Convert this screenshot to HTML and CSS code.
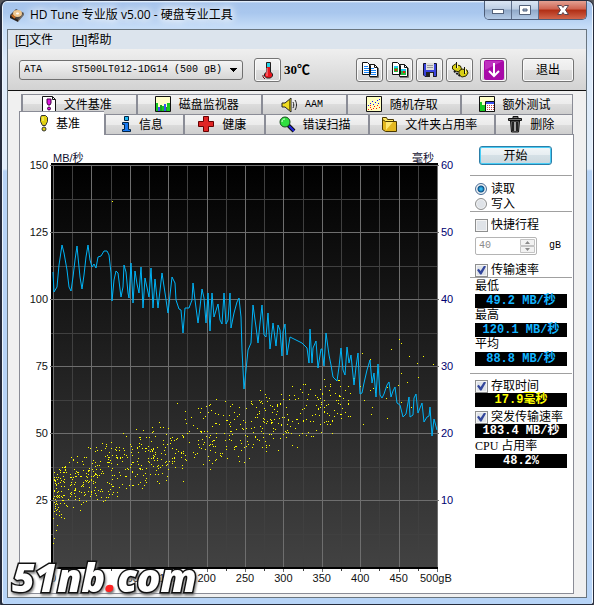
FILE: index.html
```html
<!DOCTYPE html>
<html lang="zh-CN">
<head>
<meta charset="utf-8">
<title>HD Tune 专业版 v5.00 - 硬盘专业工具</title>
<link rel="stylesheet" href="styles.css">
</head>
<body>
<div class="window">
  <header class="titlebar">
    <svg class="app-icon" width="16" height="16" viewBox="0 0 16 16"><path d="M1 8 7 2l8 4-6 8z" fill="#4a4440"/><path d="M1 8v3l8 4v-2z" fill="#26201d"/><path d="m9 13 6-7v2l-6 7z" fill="#6d655f"/><ellipse cx="8.5" cy="6.5" rx="4.5" ry="3.4" fill="#f0c890"/><ellipse cx="8.5" cy="6.5" rx="1.5" ry="1.1" fill="#fff"/><path d="m3 8 3 3" stroke="#c86a1c" stroke-width="2"/></svg>
    <h1>HD Tune 专业版 v5.00 - 硬盘专业工具</h1>
    <div class="caption">
      <button class="cap" aria-label="最小化"><svg width="14" height="12" viewBox="0 0 14 12"><rect x="1.500" y="5.500" width="11" height="4" fill="#fff" stroke="#53617a"/></svg></button>
      <button class="cap" aria-label="最大化"><svg width="14" height="12" viewBox="0 0 14 12"><path d="M1.500 1.500h11v9h-11zM5 5h4v2H5z" fill="#fff" fill-rule="evenodd" stroke="#53617a"/></svg></button>
      <button class="cap close" aria-label="关闭"><svg width="14" height="12" viewBox="0 0 14 12"><path d="M1.500 1.500h4L7 3.500l1.500-2h4L9.500 6l3 4.500h-4L7 8.500l-1.500 2h-4l3-4.500z" fill="#fff" stroke="#5b4650"/></svg></button>
    </div>
  </header>
  <main class="client">
    <nav class="menu"><a href="#file">[<u>F</u>]文件</a><a href="#help">[<u>H</u>]帮助</a></nav>
    <div class="toolbar">
      <select class="drive" aria-label="硬盘"><option>ATA&nbsp;&nbsp;&nbsp;&nbsp;&nbsp;ST500LT012-1DG14 (500 gB)</option></select>
      <button class="tool" aria-label="温度"><svg width="12" height="18" viewBox="0 0 12 18"><path d="M4.500 1.500h4v9.500l2 2v2l-2 2h-4l-2-2v-2l2-2z" fill="#e8141c" stroke="#222"/><path d="M5 2h3v4H5z" fill="#25d3e8"/><path d="M5 7v8" stroke="#ff9aa0"/><path d="M1 14v2l2 2" stroke="#6e0810" fill="none"/></svg></button>
      <output class="temp">30℃</output>
      <div class="tools">
        <button class="tool" aria-label="复制文本"><svg width="18" height="18" viewBox="0 0 18 18"><path d="M1.500 1.500h5l3 3v9h-8zM8.500 3.500h5l3 3v9h-8z" fill="#fff" stroke="#111"/><path d="M3 5.500h4M3 7.500h5M3 9.500h5M3 11.500h5M10 7.500h3M10 9.500h5M10 11.500h5M10 13.500h5" stroke="#1683f5"/><path d="M13.500 3.500v3h3" fill="none" stroke="#111"/><path d="M17.500 7v9.500H9" fill="none" stroke="#777"/></svg></button>
        <button class="tool" aria-label="复制图像"><svg width="18" height="18" viewBox="0 0 18 18"><path d="M1.500 1.500h5l3 3v9h-8zM8.500 3.500h5l3 3v9h-8z" fill="#fff" stroke="#111"/><path d="M3 5h4v6H3zM10 8h5v6h-5z" fill="#22b83a"/><path d="M3 5h4v2H3zM10 8h5v2h-5z" fill="#23c6ee"/><path d="M4 8h2v2H4zM12 10h2v2h-2z" fill="#e81818"/><path d="M13.500 3.500v3h3" fill="none" stroke="#111"/><path d="M17.500 7v9.500H9" fill="none" stroke="#777"/></svg></button>
        <button class="tool" aria-label="保存"><svg width="16" height="16" viewBox="0 0 16 16"><path d="M1.500 1.500h13v13H3l-1.500-1.500z" fill="#3a44dc" stroke="#15152e"/><path d="M4 1h8v7H4z" fill="#dedede"/><path d="M5 3.500h6M5 5.500h6" stroke="#999"/><path d="M4 10h8v5H4z" fill="#222"/><path d="M8 11h3v4H8z" fill="#ddd"/></svg></button>
        <button class="tool" aria-label="选项"><svg width="18" height="18" viewBox="0 0 18 18"><g stroke="#2b2700" fill="#d8cf13"><path d="m1.500 5 3-2 2 1 3 1 1 3-2 3-4-1-3-2z"/><path d="m8 10 3-2 5 1 1 3-2 3-4 1-3-2z"/></g><path d="M5.500 1v6M13.500 6v7" stroke="#111"/><path d="M6.500 2v5M14.500 7v5" stroke="#fff9a0"/><path d="m3 10 6 5" stroke="#111" stroke-width="2" stroke-dasharray="2 1"/></svg></button>
        <button class="tool update" aria-label="更新"><svg width="20" height="20" viewBox="0 0 20 20"><rect width="20" height="20" rx="2" fill="#a80aa8"/><path d="M1 10V1h18z" fill="#cf4ccf" opacity=".6"/><path d="M10 3v13M5 11l5 5 5-5" fill="none" stroke="#fff" stroke-width="2"/></svg></button>
        <button class="tool exit">退出</button>
      </div>
    </div>
    <div class="body">
      <div class="tabs back">
        <button class="tab w115"><svg width="15" height="17" viewBox="0 0 15 17"><path d="M.500.500h10l3 3v12H.500z" fill="#fff" stroke="#111"/><path d="M10.500.500v3h3" fill="none" stroke="#111"/><path d="M5 3h4v4L8 9H6L5 7z" fill="#e012e0" stroke="#400040"/><circle cx="7" cy="12.500" r="1.500" fill="#e012e0" stroke="#400040"/></svg>文件基准</button>
        <button class="tab w126"><svg width="17" height="17" viewBox="0 0 17 17"><path d="M.500.500h15v15H.500z" fill="#ffffc8" stroke="#111"/><path d="M1 7h2v8H1zM7 10h2v5H7zM12 7h3v8h-3z" fill="#16c820"/><path d="M3 11h2v4H3zM9 8h2v7H9z" fill="#3c50f0"/><path d="M5 9h2v6H5zM11 11h1v4h-1z" fill="#16a020"/></svg>磁盘监视器</button>
        <button class="tab w84 latin"><svg width="17" height="16" viewBox="0 0 17 16"><path d="M1 6h3l6-5v14l-6-5H1z" fill="#f0dc20" stroke="#222"/><path d="M8.500 3v10" stroke="#807000"/><path d="M12 5c1 2 1 4 0 6M14 3c2 3 2 7 0 10" fill="none" stroke="#222"/></svg>AAM</button>
        <button class="tab w114"><svg width="17" height="17" viewBox="0 0 17 17"><path d="M.500.500h15v15H.500z" fill="#ffffc0" stroke="#111"/><path d="M2 9h1v1H2zM4 7h1v1H4zM6 5h1v1H6zM7 8h1v1H7zM9 6h1v1H9zM11 4h1v1h-1zM12 7h1v1h-1zM13 3h1v1h-1z" fill="#11f"/><path d="M2 13h1v1H2zM4 11h1v1H4zM5 13h1v1H5zM7 12h1v1H7zM8 10h1v1H8zM10 12h1v1h-1zM11 9h1v1h-1zM13 11h1v1h-1zM4 9h1v1H4z" fill="#f11"/></svg>随机存取</button>
        <button class="tab w112"><svg width="17" height="17" viewBox="0 0 17 17"><path d="M.500.500h15v15H.500z" fill="#ffffc8" stroke="#111"/><path d="M1 6h2v9H1zM3 9h3v6H3z" fill="#16c820"/><path d="M6.500 5.500h9v10h-9z" fill="#fff" stroke="#111"/><path d="M7 6h8v2H7z" fill="#3c50f0"/><path d="M8 9.500h7M8 11.500h7M8 13.500h7" stroke="#c44" stroke-dasharray="1 1"/></svg>额外测试</button>
      </div>
      <div class="tabs front">
        <button class="tab w85 active"><svg width="10" height="17" viewBox="0 0 10 17"><path d="M2.500.500h4l2 2v4l-2 4h-3l-2-4v-4z" fill="#e0d010" stroke="#333"/><path d="M4 2v4" stroke="#fffa90"/><circle cx="5" cy="14" r="2" fill="#e0d010" stroke="#333"/></svg>基准</button>
        <button class="tab w78"><svg width="11" height="17" viewBox="0 0 11 17"><path d="M3.500.500h4v4h-4z" fill="#20b8f0" stroke="#024"/><path d="M1.500 6.500h6v7h2v2h-8v-2h2v-5h-2z" fill="#1878f0" stroke="#024"/></svg>信息</button>
        <button class="tab w80"><svg width="17" height="17" viewBox="0 0 17 17"><path d="M5.500.500h5v5h5v5h-5v5h-5v-5h-5v-5h5z" fill="#e02424" stroke="#600"/></svg>健康</button>
        <button class="tab w104"><svg width="17" height="17" viewBox="0 0 17 17"><path d="m9 9 6 6" stroke="#111" stroke-width="4"/><path d="m10 10 5 5" stroke="#2028e0" stroke-width="2"/><circle cx="6" cy="6" r="5" fill="#30e040" stroke="#174a1c"/><path d="M3 6c0-2 1-3 3-3" stroke="#d8ffd8" fill="none"/></svg>错误扫描</button>
        <button class="tab w128"><svg width="17" height="17" viewBox="0 0 17 17"><path d="M1.500 13.500v-12h4l1 2h6v2" fill="#ffe860" stroke="#4a3800"/><path d="M4.500 5.500h11v10h-11l-3-2v-10z" fill="#e4b820" stroke="#4a3800"/><path d="M5 6h7l-7 8z" fill="#ffe870"/></svg>文件夹占用率</button>
        <button class="tab w77"><svg width="15" height="17" viewBox="0 0 15 17"><path d="M5 2V.500h5V2M.500 2.500h13v2H.500z" fill="#777" stroke="#111"/><path d="M2.500 5h9l-1 11h-7z" fill="#777" stroke="#111"/><path d="M5 6v9M9 6v9" stroke="#222" stroke-width="2"/><path d="M7 6v9" stroke="#ccc"/></svg>删除</button>
      </div>
      <section class="panel">
        <div class="chart">
          <svg viewBox="20 135 450 458" role="img" aria-label="传输速率与存取时间">
            <defs><linearGradient id="plot" x1="0" y1="0" x2="0" y2="1"><stop offset="0" stop-color="#000"/><stop offset="1" stop-color="#424242"/></linearGradient></defs>
            <rect x="51" y="163" width="387" height="406" fill="#000"/>
            <rect x="53" y="165" width="384" height="402" fill="url(#plot)"/>
            <g id="grid" shape-rendering="crispEdges"></g>
            <path id="dots" fill="#ff0" shape-rendering="crispEdges"/>
            <polyline class="rate" points="53,272 54,292 57,287 59,265 62,245 64,253 67,270 69,287 71,291 73,277 75,260 77,246 78,257 80,277 82,289 84,275 86,257 88,245 90,260 92,267 94,264 96,268 98,257 101,256 104,251 107,251 109,255 111,273 112,301 114,280 116,271 118,273 121,297 123,287 124,265 126,272 128,293 129,298 131,263 133,303 135,271 137,284 139,293 141,267 143,308 145,278 149,297 151,268 153,308 155,279 158,308 162,273 165,293 168,313 172,277 175,283 176,300 179,309 181,310 183,333 185,308 189,308 192,300 193,283 195,300 198,323 200,307 202,289 204,298 206,323 208,293 210,331 212,293 214,317 218,304 220,320 222,324 224,293 226,324 228,320 230,293 231,328 234,313 237,302 239,298 241,317 242,350 244,389 246,370 248,350 251,343 253,305 256,327 258,343 260,323 262,305 264,335 266,337 268,313 270,349 273,323 276,346 278,325 280,330 282,356 283,332 285,324 287,355 290,337 302,343 307,348 309,363 310,329 312,363 313,348 316,341 318,368 321,349 322,349 324,366 326,333 329,355 331,365 333,377 337,381 339,367 341,348 343,370 345,375 347,347 349,363 351,355 354,385 356,367 358,353 360,394 362,393 364,383 367,370 370,360 372,383 374,373 376,397 378,364 380,395 382,398 384,394 387,385 389,382 391,397 393,391 395,387 397,403 400,405 403,417 406,414 409,397 410,417 413,415 414,398 416,394 418,413 422,403 424,422 427,417 429,416 430,407 432,436 434,419 437,430"/>
            <g class="num" id="labels"></g>
            <text class="unit" x="53" y="162">MB/秒</text>
            <text class="unit" x="412" y="162">毫秒</text>
          </svg>
        </div>
        <aside class="side">
          <div class="group start"><button class="go">开始</button></div>
          <div class="group mode">
            <label class="row"><input type="radio" name="mode" checked>读取</label>
            <label class="row"><input type="radio" name="mode">写入</label>
          </div>
          <div class="group stroke">
            <label class="row"><input type="checkbox">快捷行程</label>
            <label class="size"><span class="spin"><input type="text" value="40" disabled><i class="arrows"><svg width="15" height="14" viewBox="0 0 15 14"><path d="M.500.500h14v6H.500zM.500 7.500h14v6H.500z" fill="#f2f2f2" stroke="#c4c4c4"/><path d="m5 5 2.500-3L10 5zM5 9l2.500 3L10 9z" fill="#8a8a8a"/></svg></i></span>gB</label>
            <label class="row"><input type="checkbox" checked>传输速率</label>
          </div>
          <div class="group rates">
            <span class="cap-text">最低</span><output class="lcd">49.2 MB/秒</output>
            <span class="cap-text">最高</span><output class="lcd">120.1 MB/秒</output>
            <span class="cap-text">平均</span><output class="lcd">88.8 MB/秒</output>
          </div>
          <div class="group extra">
            <label class="row"><input type="checkbox" checked>存取时间</label><output class="lcd yellow">17.9毫秒</output>
            <label class="row gap"><input type="checkbox" checked>突发传输速率</label><output class="lcd white">183.4 MB/秒</output>
            <span class="cap-text">CPU 占用率</span><output class="lcd white">48.2%</output>
          </div>
        </aside>
      </section>
    </div>
  </main>
  <div class="watermark">51nb<b>.</b>com</div>
</div>
<script src="chart.js"></script>
</body>
</html>
```
FILE: styles.css
```css
* { box-sizing: border-box; }
body {
  margin: 0;
  background: #55565c;
  color: #000;
  font: 12px/14px "Liberation Serif", "Noto Sans CJK SC", serif;
}
button, input, select { font: inherit; color: inherit; margin: 0; }
button { padding: 0; }
svg { display: block; flex: none; }

.window {
  position: relative;
  display: flex;
  flex-direction: column;
  min-height: 100vh;
  padding: 0 6px 6px 5px;
  border: 2px solid #262c3c;
  border-top-width: 1px;
  border-right-width: 1px;
  border-radius: 7px 7px 4px 4px;
  background: linear-gradient(#f4f9ff, #a6c4ec 2px, #a9c7ee 12px, #c5dcf7 26px, #dceafa 60px, #e2eefb 168px, #b7d4f7 170px, #b7d4f7);
  box-shadow: inset 1px 0 #eef6ff, inset -1px 0 #eef6ff;
}
.titlebar {
  display: flex;
  align-items: center;
  height: 28px;
  padding-left: 2px;
}
.titlebar h1 {
  flex: 1;
  margin: 0 0 0 5px;
  font: 12px/18px "Open Sans", "Noto Sans CJK SC", sans-serif;
  text-shadow: 0 0 6px #fff, 0 0 10px #fff, 0 0 12px #fff;
}
.caption {
  display: flex;
  align-self: flex-start;
  height: 19px;
  overflow: hidden;
  border: 1px solid #4d5d78;
  border-top: 0;
  border-radius: 0 0 5px 5px;
}
.cap {
  display: grid;
  place-items: center;
  width: 27px;
  border: 0;
  border-right: 1px solid #5c6d8a;
  background: linear-gradient(#dbe6f4, #bccde3 45%, #90a8c8 50%, #b4cae6);
}
.close {
  width: 47px;
  border-right: 0;
  background: linear-gradient(#e4a193, #cf6350 45%, #b02d14 50%, #d2664c);
}

.client {
  flex: 1;
  display: flex;
  flex-direction: column;
  border: 1px solid #69757f;
  background: #f0f0f0;
}
.menu {
  display: flex;
  gap: 19px;
  height: 19px;
  padding: 3px 7px;
  background: #dce4ed;
  font-family: "Liberation Sans", "Noto Sans CJK SC", sans-serif;
}
.menu a { color: #000; text-decoration: none; }
.toolbar {
  display: flex;
  align-items: center;
  height: 42px;
  padding: 0 12px 0 11px;
  border-bottom: 1px solid #111;
  background: linear-gradient(#efefef, #d2d2d2);
}
.drive {
  appearance: none;
  width: 224px;
  height: 20px;
  padding: 0 4px;
  border: 1px solid #707070;
  border-radius: 3px;
  background:
    linear-gradient(to bottom right, #000 50%, transparent 50%) right 4px center / 4px 4px no-repeat,
    linear-gradient(to bottom left, #000 50%, transparent 50%) right 8px center / 4px 4px no-repeat,
    linear-gradient(#f4f4f4, #d6d6d6);
  font: 10px/16px "Liberation Mono", monospace;
}
.tool {
  display: grid;
  place-items: center;
  width: 27px;
  height: 24px;
  border: 1px solid #747474;
  border-radius: 3px;
  background: linear-gradient(#f4f4f4, #ebebeb 50%, #dddddd 50%, #d2d2d2);
  box-shadow: inset 0 0 0 1px #fafafa;
}
.drive + .tool { margin-left: 11px; }
.temp { margin-left: 3px; font-size: 13px; font-weight: bold; }
.tools { display: flex; gap: 3px; margin-left: auto; }
.update { margin-left: 4px; }
.exit { width: 52px; margin-left: 12px; }

.body {
  flex: 1;
  display: flex;
  flex-direction: column;
  padding: 3px 12px 3px 11px;
}
.tabs { display: flex; padding: 0 1px 0 2px; }
.back { height: 20px; }
.front { height: 20px; padding: 0 1px 0 0; }
.tab {
  display: flex;
  align-items: center;
  justify-content: center;
  gap: 7px;
  min-width: 0;
  padding: 0 5px 0 0;
  border: 0;
  border-top: 1px solid #8a8c96;
  border-left: 2px solid #8a8c96;
  background: linear-gradient(#f3f3f3, #ebebeb 50%, #dcdcdc 50%, #cecece);
  white-space: nowrap;
}
.tabs .tab:last-child { border-right: 1px solid #8a8c96; }
.latin { font: 10px/14px "Liberation Mono", monospace; }
.active {
  z-index: 1;
  height: 24px;
  margin-top: -3px;
  border-left-width: 1px;
  background: #fff;
}
.w77 { flex: 77 1 0; }
.w78 { flex: 78 1 0; }
.w80 { flex: 80 1 0; }
.w84 { flex: 84 1 0; }
.w85 { flex: 85 1 0; }
.w104 { flex: 104 1 0; }
.w112 { flex: 112 1 0; }
.w114 { flex: 114 1 0; }
.w115 { flex: 115 1 0; }
.w126 { flex: 126 1 0; }
.w128 { flex: 128 1 0; }

.panel {
  flex: 1;
  display: flex;
  align-items: flex-start;
  padding-right: 1px;
  border: 1px solid #8a8c96;
  background: #fff;
}
.chart { flex: 1; }
.chart svg { width: 100%; height: auto; }
.rate { fill: none; stroke: #00b4f8; stroke-width: 1; }
.num { font: 11px "Liberation Sans", sans-serif; fill: #111; }
.right { fill: #000070; }
.unit { font: 11px "Liberation Sans", "Noto Sans CJK SC", sans-serif; fill: #101030; }

.side { flex: none; width: 102px; }
.group {
  display: flex;
  flex-direction: column;
  padding: 0 5px;
  border-top: 1px solid #a0a0a0;
}
.start { height: 40px; padding: 11px 20px 0 9px; border: 0; }
.go {
  height: 19px;
  border: 1px solid #2c7ea8;
  border-radius: 3px;
  background: linear-gradient(#f2f6f8, #e6edf1 50%, #d5e0e6 50%, #ccd8de);
  box-shadow: inset 0 0 0 1px #48cdf6;
}
.mode { height: 36px; padding-top: 5px; }
.stroke { height: 66px; padding-top: 6px; }
.rates { height: 96px; padding-top: 1px; }
.extra { padding-top: 5px; }
.row {
  display: flex;
  align-items: center;
  gap: 3px;
  height: 14px;
  white-space: nowrap;
}
.mode .row { height: 15px; }
.row input {
  appearance: none;
  flex: none;
  width: 13px;
  height: 13px;
  border: 1px solid #8e8f8f;
  background: #dfe3e8;
  box-shadow: inset 0 0 0 1px #f4f4f4;
}
.row input[type="radio"] { width: 12px; height: 12px; margin-right: 1px; border-radius: 50%; }
.row input[type="radio"]:checked {
  border-color: #4a6c94;
  background: radial-gradient(circle, #35b8ee 1px, #0b4f86 3px, #dfe8f0 4px);
}
.row input[type="checkbox"]:checked { display: grid; place-items: center; }
.row input[type="checkbox"]:checked::after {
  content: "";
  width: 9px;
  height: 9px;
  background: #34479c;
  clip-path: polygon(0 50%, 20% 35%, 40% 60%, 80% 0, 100% 10%, 50% 100%, 35% 100%);
}
.size {
  display: flex;
  align-items: center;
  gap: 12px;
  margin: 5px 0 8px;
  font: 10px/14px "Liberation Mono", monospace;
}
.spin {
  display: flex;
  width: 62px;
  height: 18px;
  padding: 1px;
  border: 1px solid #b4b4b4;
  border-radius: 2px;
}
.spin input {
  flex: 1;
  min-width: 0;
  padding: 0 2px;
  border: 0;
  background: none;
  color: #8a8a8a;
}
.cap-text { height: 15px; line-height: 15px; }
.lcd {
  height: 14px;
  background: #000;
  color: #12b4ff;
  font: bold 12px/14px "Liberation Mono", "Noto Sans CJK SC", monospace;
  text-align: center;
  white-space: nowrap;
}
.yellow { color: #ff0; }
.white { color: #fff; }
.gap { margin-top: 3px; }
.extra .cap-text { margin-top: 1px; }

.watermark {
  position: absolute;
  left: 10px;
  bottom: 9px;
  color: #fff;
  font: italic 800 39px/36px "Open Sans", sans-serif;
  -webkit-text-stroke: 3px #111;
  paint-order: stroke fill;
  filter: drop-shadow(1px 2px 1px #777);
}
.watermark b { color: #f22; -webkit-text-stroke: 0; }
```
FILE: chart.js
```js
const X0 = 53, X1 = 437, Y0 = 165, Y1 = 567;

// Grid lines: every other one is a labelled division.
let grid = "";
const line = (x, y, w, h, major) =>
  `<rect x="${x}" y="${y}" width="${w}" height="${h}" fill="${major ? "#6e6e6e" : "#404040"}"/>`;
for (const major of [false, true]) {
  for (let i = 0; i <= 20; i++) {
    if ((i % 2 === 0) !== major) continue;
    const x = Math.round(X0 + i * (X1 - X0) / 20);
    grid += line(x, Y0, 1, Y1 - Y0, major) + line(x, 569, 1, major ? 3 : 2, major);
  }
  for (let i = 0; i < 12; i++) {
    if ((i % 2 === 0) !== major) continue;
    const y = Math.round(Y0 + i * (Y1 - Y0) / 12);
    grid += line(major ? 50 : 51, y, major ? 389 : 387, 1, major);
  }
}
document.getElementById("grid").innerHTML = grid;

let labels = "";
for (let i = 0; i < 6; i++) {
  const y = Y0 + i * 67 + 4;
  labels += `<text x="48" y="${y}" text-anchor="end">${150 - i * 25}</text>`;
  labels += `<text class="right" x="441" y="${y}">${60 - i * 10}</text>`;
}
for (let i = 0; i < 10; i++) {
  labels += `<text x="${X0 + i * 38.4}" y="582" text-anchor="middle">${i * 50}</text>`;
}
labels += `<text x="420" y="582">500gB</text>`;
document.getElementById("labels").innerHTML = labels;

// Access-time samples: a band between two envelopes, thinning with position.
const upper = [[53, 468], [65, 454], [90, 438], [130, 424], [168, 418], [205, 393], [245, 390], [300, 376], [345, 374], [375, 366]];
const lower = [[53, 520], [70, 519], [90, 512], [130, 498], [168, 490], [205, 476], [245, 463], [300, 450], [340, 436], [375, 420]];
const at = (pts, x) => {
  const i = Math.max(1, pts.findIndex(p => p[0] >= x));
  const [ax, ay] = pts[i - 1], [bx, by] = pts[i];
  return ay + (by - ay) * (x - ax) / (bx - ax);
};
let seed = 4711;
const rnd = () => (seed = (seed * 16807) % 2147483647) / 2147483647;
const dots = [[112, 201], [362, 353], [370, 359], [391, 349], [399, 339], [401, 343], [409, 356], [423, 356],
  [401, 373], [398, 385], [407, 382], [418, 377], [417, 363], [433, 364], [387, 418], [372, 407], [371, 414],
  [363, 424], [364, 400], [370, 390], [373, 388], [375, 392], [387, 387], [386, 398], [401, 402], [411, 407],
  [360, 386], [354, 378], [53, 543], [54, 538], [56, 530], [57, 525], [177, 403]];
for (let i = 0; i < 760; i++) {
  const x = Math.round(X0 + 300 * Math.pow(rnd(), 1.4));
  const t = rnd() * .6 + rnd() * .4;
  dots.push([x, Math.round(at(upper, x) * (1 - t) + at(lower, x) * t)]);
}
document.getElementById("dots").setAttribute("d", dots.map(([x, y]) => `M${x} ${y}h1v1h-1z`).join(""));
```
